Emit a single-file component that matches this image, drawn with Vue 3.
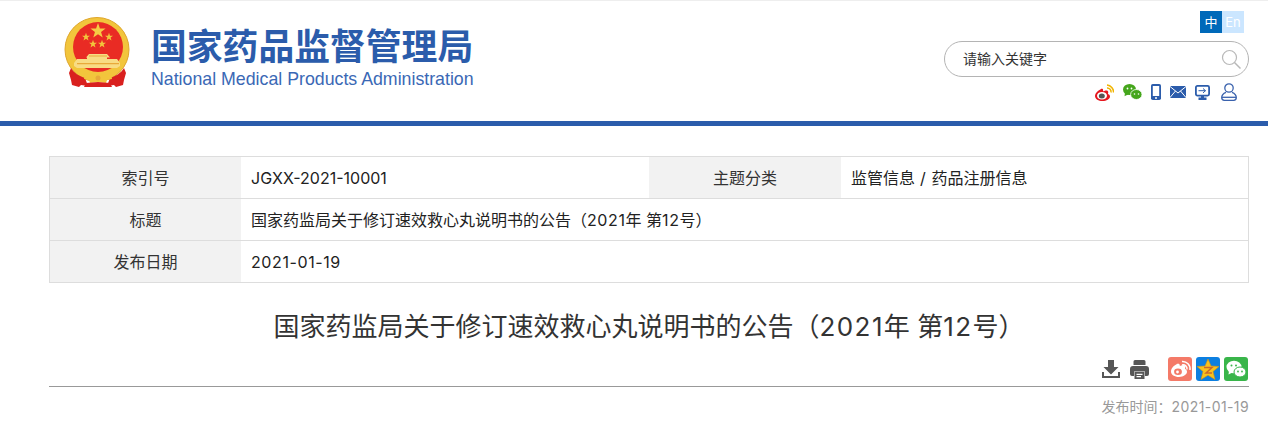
<script setup>
const titleText = '国家药监局关于修订速效救心丸说明书的公告（2021年 第12号）'
const rows = [
  [{ t: '索引号', k: true, w: 191 }, { t: 'JGXX-2021-10001', w: 408, plain: true }, { t: '主题分类', k: true, w: 192 }, { t: '监管信息 / 药品注册信息', w: 407 }],
  [{ t: '标题', k: true, w: 191 }, { t: titleText, w: 1007 }],
  [{ t: '发布日期', k: true, w: 191 }, { t: '2021-01-19', w: 1007 }]
]
const smallStars = [[22, 20], [45, 20], [29, 27], [38, 27]]
const star = 'M0-1 .24-.31H.95L.38.12.59.81 0 .4-.59.81-.38.12-.95-.31H-.24Z'
// Runs of digits get their own span: the reference's digits are wider than the installed font's.
const parts = (text) => text.split(/([\d\- /]{2,})/).filter(Boolean).map((s) => ({ s, num: /^[\d\- /]+$/.test(s) }))
</script>

<template>
  <div class="page">
    <header class="head">
      <div class="brand">
        <svg class="emblem" width="66" height="72" viewBox="0 0 66 72">
          <circle cx="33" cy="32.500" r="32" fill="#f2c53c"/>
          <path d="M33 .5a32 32 0 0 1 0 64 32 32 0 0 1 0-64" fill="none" stroke="#dfa62c"/>
          <circle cx="34" cy="30" r="25" fill="#e92b24"/>
          <path :d="star" fill="#f5cb45" transform="translate(34 14) scale(8)"/>
          <path v-for="s in smallStars" :key="s[0]" :d="star" fill="#f2c53c" :transform="`translate(${s[0]} ${s[1]}) scale(4.200)`"/>
          <path d="M25 37h18l3 3.500h-3V42h10l3 4v3l-3 2H13l-3-2v-3l3-4h10v-1.500h-1z" fill="#f8dc84"/>
          <path d="M25 38.500h18v1H25zM13 46h42v1.200H13z" fill="#e8a93a"/>
          <path d="M7 51c3 5 8 8 14 10l3 8-7-1-2 2-7-2-1-5-2-7z" fill="#d9201e"/>
          <path d="M60 51c-3 5-8 8-14 10l-3 8 7-1 2 2 7-2 1-5 2-7z" fill="#d9201e"/>
          <path d="M21 56c4 2 8 3 13 3s9-1 13-3l1 6-5 1-1 3-8-1-8 1-1-3-5-1z" fill="#f2c53c"/>
          <path d="M22 66l12-1 12 1 2 4H20z" fill="#d9201e"/>
          <circle cx="34" cy="61" r="2.500" fill="#e8a93a"/>
        </svg>
        <div class="brand-text">
          <div class="cn-name">国家药品监督管理局</div>
          <div class="en-name">National Medical Products Administration</div>
        </div>
      </div>
      <div class="tools">
        <div class="lang"><span class="zh">中</span><span class="en">En</span></div>
        <div class="search">
          <span class="placeholder">请输入关键字</span>
          <svg width="20" height="20" viewBox="0 0 20 20" fill="none" stroke="#b8b8b8" stroke-width="1.200">
            <circle cx="8.500" cy="8.500" r="7"/><path d="M13.500 13.500l6 6" stroke-width="1.500"/>
          </svg>
        </div>
        <div class="links">
          <svg width="19" height="17" viewBox="0 0 19 17">
            <path d="M7 4.500C3.500 6 0 9 0 12c0 3 3.500 5 7.500 5s7.500-2 7.500-4.500c0-1.800-2-2.200-2-2.700s.8-2-.5-3-3.800.4-4.300.4.800-2.500-1.700-2.700z" fill="#e6161e"/>
            <ellipse cx="7" cy="11.800" rx="5" ry="3.800" fill="#fff"/><ellipse cx="6.800" cy="12" rx="3" ry="2.500" fill="#555"/>
            <path d="M12 4a3.800 3.800 0 0 1 4 4.500" fill="none" stroke="#f0b400" stroke-width="1.500"/>
            <path d="M12 1a7 7 0 0 1 6.500 7.500" fill="none" stroke="#f0b400" stroke-width="1.500"/>
          </svg>
          <svg width="19" height="16" viewBox="0 0 19 16">
            <ellipse cx="6.500" cy="5.500" rx="6.500" ry="5.500" fill="#45a61c"/><path d="M2 8.500l-.5 3.700 4-2z" fill="#45a61c"/>
            <ellipse cx="13.300" cy="10.500" rx="5.700" ry="5" fill="#45a61c" stroke="#fff" stroke-width=".8"/>
            <circle cx="4.500" cy="4.500" r=".9" fill="#fff"/><circle cx="8.500" cy="4.500" r=".9" fill="#fff"/>
            <circle cx="11.500" cy="10" r=".8" fill="#fff"/><circle cx="15.500" cy="10" r=".8" fill="#fff"/>
          </svg>
          <svg width="10" height="16" viewBox="0 0 10 16">
            <rect width="10" height="16" rx="1.800" fill="#2b5cab"/><rect x="1.800" y="2" width="6.400" height="10" fill="#fff"/><circle cx="5" cy="14" r="1" fill="#fff"/>
          </svg>
          <svg width="16" height="12" viewBox="0 0 16 12">
            <rect width="16" height="12" rx="1" fill="#2b5cab"/><path d="M0 .5l8 6.500 8-6.500M0 11.500l5.500-6.500M16 11.500L10.500 5" fill="none" stroke="#fff" stroke-width="1"/>
          </svg>
          <svg width="15" height="15" viewBox="0 0 15 15">
            <rect x=".9" y=".9" width="13.200" height="9.700" rx="1.500" fill="#fff" stroke="#2b5cab" stroke-width="1.800"/>
            <path d="M3.500 5.700h7M8 3.500l2.500 2.200L8 7.900" fill="none" stroke="#2b5cab"/><path d="M6 11h3v1.500h2.500V15h-8v-2.500H6z" fill="#2b5cab"/>
          </svg>
          <svg class="user" width="16" height="18" viewBox="0 0 16 18" fill="none" stroke="#3a62ad" stroke-width="1.300">
            <circle cx="8" cy="5" r="4.200"/><path d="M5 9.300C2.500 10.300.7 12.300.7 14.500c0 1.600 1 2.800 2.600 2.800h9.400c1.600 0 2.600-1.200 2.600-2.800 0-2.200-1.800-4.200-4.300-5.200"/><path d="M1 14.300h14"/>
          </svg>
        </div>
      </div>
    </header>
    <div class="rule"></div>

    <main class="main">
      <div class="info">
        <div v-for="(row, i) in rows" :key="i" class="info-row">
          <div v-for="c in row" :key="c.t" class="cell" :class="{ key: c.k }" :style="{ width: c.w + 'px' }">
            <template v-if="c.k || c.plain">{{ c.t }}</template>
            <template v-else><span v-for="(p, j) in parts(c.t)" :key="j" :class="{ num: p.num }">{{ p.s }}</span></template>
          </div>
        </div>
      </div>
      <h1 class="title"><span v-for="(p, j) in parts(titleText)" :key="j" :class="{ num: p.num }">{{ p.s }}</span></h1>
      <div class="actions">
        <svg class="dl" width="18" height="18" viewBox="0 0 18 18" fill="#565656">
          <path d="M6 0h6v7h4.500L9 14.500 1.500 7H6z"/><path d="M0 12h2v4h14v-4h2v6H0z"/>
        </svg>
        <svg class="print" width="19" height="19" viewBox="0 0 19 19" fill="#565656">
          <path d="M5 0h9a1.500 1.500 0 0 1 1.500 1.500V5h-12V1.500A1.500 1.500 0 0 1 5 0z"/>
          <path d="M3 6h13a3 3 0 0 1 3 3v5a2 2 0 0 1-2 2h-2v-4.500H4V16H2a2 2 0 0 1-2-2V9a3 3 0 0 1 3-3z"/>
          <path d="M4.500 12h10v7h-10zM6.500 13.800v1.200h6v-1.200zM6.500 16v1.200h4.500V16z" fill-rule="evenodd"/>
        </svg>
        <svg class="share-first" width="24" height="24" viewBox="0 0 24 24">
          <rect width="24" height="24" rx="3" fill="#f47a68"/>
          <path d="M9 7C5.500 8.500 3 11.500 3 14.500c0 3.200 3.500 5.500 8 5.500s8-2.500 8-5.200c0-2-2-2.500-2-3.200s1-2.200-.5-3.200-4 .5-4.500.5 .5-3.200-3.500-1.900z" fill="#fff"/>
          <ellipse cx="10" cy="14.800" rx="3.900" ry="3.200" fill="#f47a68"/><circle cx="9.500" cy="15" r="1.400" fill="#fff"/>
          <path d="M14 8a4 4 0 0 1 5 4.500M14 4.500a7.500 7.500 0 0 1 8 8.500" fill="none" stroke="#fff" stroke-width="1.500"/>
        </svg>
        <svg width="24" height="24" viewBox="0 0 24 24">
          <rect width="24" height="24" rx="3" fill="#0d7fe0"/>
          <path d="M12 2l3 7 8 .5-6 5 2 8-7-4.300L5 22.500l2-8-6-5 8-.5z" fill="#f8c21c" stroke="#d9930f" stroke-width=".6"/>
          <path d="M8 10.500h8l-6 5.500h6" fill="none" stroke="#c9692c" stroke-width="1.500"/>
        </svg>
        <svg width="24" height="24" viewBox="0 0 24 24">
          <rect width="24" height="24" rx="3" fill="#39b54a"/>
          <ellipse cx="10" cy="10" rx="7.500" ry="6.300" fill="#fff"/><path d="M5 14l-.5 3.500 4-2z" fill="#fff"/>
          <ellipse cx="16" cy="15" rx="6" ry="5" fill="#fff" stroke="#39b54a"/>
          <circle cx="7.500" cy="8.500" r="1" fill="#39b54a"/><circle cx="12" cy="8.500" r="1" fill="#39b54a"/>
          <circle cx="14" cy="14.500" r=".9" fill="#39b54a"/><circle cx="18" cy="14.500" r=".9" fill="#39b54a"/>
        </svg>
      </div>
      <div class="date">发布时间：<span class="date-num">2021-01-19</span></div>
    </main>
  </div>
</template>

<style>
html, body { margin: 0; background: #fff; }
</style>

<style scoped>
.page {
  width: 1268px;
  height: 428px;
  overflow: hidden;
  font-family: "Inter", "Noto Sans CJK SC", sans-serif;
  color: #333;
}
.head {
  height: 120px;
  border-top: 1px solid #eee;
  display: flex;
  justify-content: space-between;
}
.brand { display: flex; margin-left: 64px; padding-top: 16px; }
.emblem { display: block; }
.brand-text { margin-left: 21px; padding-top: 5px; }
.cn-name {
  font: 700 35.800px/44px "Noto Sans CJK SC", sans-serif;
  color: #2b5cab;
  white-space: nowrap;
}
.en-name {
  font: 400 17.750px/24px "Liberation Sans", sans-serif;
  color: #3a68b5;
  margin-top: 1px;
  white-space: nowrap;
}
.tools {
  width: 305px;
  margin-right: 19px;
  display: flex;
  flex-direction: column;
  align-items: flex-end;
  padding-top: 10px;
}
.lang { display: flex; height: 22px; margin-right: 5px; font-size: 13px; line-height: 22px; color: #fff; text-align: center; }
.lang span { width: 22px; }
.zh { background: #0069b9; }
.en { background: #cbe6ff; }
.search {
  width: 278px;
  height: 34px;
  margin-top: 8px;
  border: 1px solid #b4b4b4;
  border-radius: 18px;
  display: flex;
  align-items: center;
  justify-content: space-between;
  padding: 0 7px 0 18px;
  font-size: 14px;
  color: #333;
}
.placeholder { margin-top: -2px; }
.links { display: flex; align-items: center; gap: 9px; height: 18px; margin-top: 6px; padding-right: 12px; }
.user { margin-left: 2px; }
.rule { height: 5px; background: #2b5cab; }
.main { padding: 30px 19px 0 49px; }
.info { border: 1px solid #ddd; border-bottom: 0; width: 1198px; }
.info-row { display: flex; height: 41px; border-bottom: 1px solid #ddd; }
.cell {
  box-sizing: border-box;
  padding-left: 10px;
  font-size: 16px;
  line-height: 42px;
  color: #222;
  white-space: pre;
}
.cell .num { letter-spacing: .6px; }
.cell.key { background: #f2f2f2; text-align: center; padding: 0; color: #333; }
.title {
  margin: 22px 0 0;
  font-weight: 400;
  font-size: 26px;
  line-height: 44px;
  text-align: center;
  color: #333;
}
.title .num { letter-spacing: 1.400px; }
.actions {
  height: 29px;
  margin-top: 8px;
  border-bottom: 1px solid #999;
  display: flex;
  justify-content: flex-end;
  align-items: flex-start;
  gap: 4px;
  padding-right: 1px;
}
.dl, .print { margin-top: 3px; }
.print { margin-left: 6px; }
.share-first { margin-left: 15px; }
.date {
  margin-top: 10px;
  text-align: right;
  font-size: 14px;
  line-height: 20px;
  color: #999;
}
.date-num { letter-spacing: .4px; }
</style>
